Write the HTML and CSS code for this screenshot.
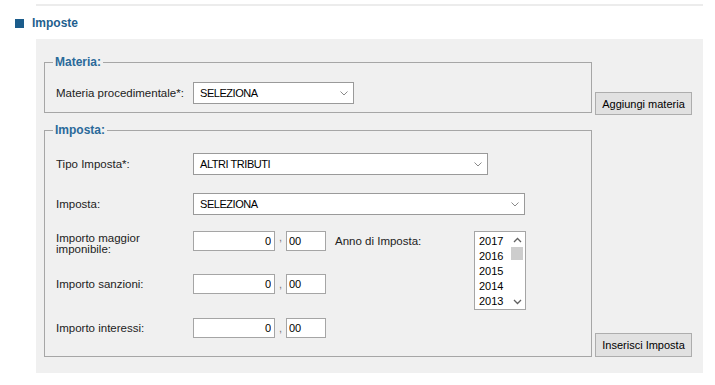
FILE: index.html
```html
<!DOCTYPE html>
<html lang="it">
<head>
    <meta charset="UTF-8">
    <meta name="viewport" content="width=device-width, initial-scale=1.0">
    <title>Imposte</title>
    <link rel="stylesheet" href="styles.css">
</head>
<body>
    <div class="top-line"></div>

    <h2 class="section-title"><span class="bullet"></span>Imposte</h2>

    <div class="panel">
        <!-- materia -->
        <div class="block-row">
            <fieldset class="box box-materia">
                <legend>Materia:</legend>
                <div class="form-row">
                    <label class="field-label">Materia procedimentale*:</label>
                    <div class="select select-materia">
                        <span class="select-text">SELEZIONA</span>
                        <svg class="chevron" width="8" height="5" viewBox="0 0 8 5"><path d="M0.5 0.5 L4 4 L7.5 0.5" fill="none" stroke="#8a8a8a" stroke-width="1"/></svg>
                    </div>
                </div>
            </fieldset>
            <button class="btn">Aggiungi materia</button>
        </div>

        <!-- imposta -->
        <div class="block-row">
            <fieldset class="box box-imposta">
                <legend>Imposta:</legend>
                <div class="form-row">
                    <label class="field-label">Tipo Imposta*:</label>
                    <div class="select select-tipo">
                        <span class="select-text">ALTRI TRIBUTI</span>
                        <svg class="chevron" width="8" height="5" viewBox="0 0 8 5"><path d="M0.5 0.5 L4 4 L7.5 0.5" fill="none" stroke="#8a8a8a" stroke-width="1"/></svg>
                    </div>
                </div>
                <div class="form-row row-imposta">
                    <label class="field-label">Imposta:</label>
                    <div class="select select-imposta">
                        <span class="select-text">SELEZIONA</span>
                        <svg class="chevron" width="8" height="5" viewBox="0 0 8 5"><path d="M0.5 0.5 L4 4 L7.5 0.5" fill="none" stroke="#8a8a8a" stroke-width="1"/></svg>
                    </div>
                </div>

                <div class="importi">
                    <div class="importi-col">
                        <div class="importo-row importo-top">
                            <label class="field-label two-lines">Importo maggior imponibile:</label>
                            <input class="num-int" type="text" value="0">
                            <span class="sep">,</span>
                            <input class="num-dec" type="text" value="00">
                        </div>
                        <div class="importo-row">
                            <label class="field-label">Importo sanzioni:</label>
                            <input class="num-int" type="text" value="0">
                            <span class="sep">,</span>
                            <input class="num-dec" type="text" value="00">
                        </div>
                        <div class="importo-row">
                            <label class="field-label">Importo interessi:</label>
                            <input class="num-int" type="text" value="0">
                            <span class="sep">,</span>
                            <input class="num-dec" type="text" value="00">
                        </div>
                    </div>

                    <label class="field-label anno-label">Anno di Imposta:</label>
                    <div class="listbox">
                        <ul class="year-list">
                            <li>2017</li>
                            <li>2016</li>
                            <li>2015</li>
                            <li>2014</li>
                            <li>2013</li>
                        </ul>
                        <div class="scrollbar">
                            <svg width="9" height="6" viewBox="0 0 9 6"><path d="M1 5 L4.5 1.5 L8 5" fill="none" stroke="#606060" stroke-width="1.3"/></svg>
                            <div class="thumb"></div>
                            <div class="track"></div>
                            <svg width="9" height="6" viewBox="0 0 9 6"><path d="M1 1 L4.5 4.5 L8 1" fill="none" stroke="#606060" stroke-width="1.3"/></svg>
                        </div>
                    </div>
                </div>
            </fieldset>
            <button class="btn btn-imposta">Inserisci Imposta</button>
        </div>
    </div>
</body>
</html>
```

FILE: styles.css
```css
body {
    margin: 0;
    font-family: "Liberation Sans", Arial, sans-serif;
    color: #222;
    background: #fff;
}
.top-line {
    height: 2px;
    margin: 4px 12px 0 36px;
    background: #ececec;
}
.section-title {
    display: flex;
    align-items: center;
    gap: 8px;
    height: 14px;
    margin: 10px 0 0 15px;
    font-size: 12px;
    font-weight: bold;
    color: #1f5f8e;
}
.bullet {
    width: 9px;
    height: 9px;
    background: #1b5c8b;
}
.panel {
    width: 667px;
    margin: 9px 0 0 36px;
    padding: 16px 8px;
    box-sizing: border-box;
    background: #f0f0f0;
}
.block-row {
    display: flex;
    align-items: flex-end;
    gap: 3px;
}
.block-row + .block-row {
    margin-top: 8px;
}
.box {
    width: 548px;
    box-sizing: border-box;
    margin: 0;
    border: 1px solid #a6a6a6;
    padding: 12px 10px 8px 11px;
}
.box-materia {
    margin-bottom: 2px;
}
.box-imposta {
    padding-top: 15px;
    padding-bottom: 18px;
}
.box legend {
    margin-left: -3px;
    padding: 0 2px;
    font-size: 12px;
    line-height: 15px;
    font-weight: bold;
    color: #2a6a9a;
}
.form-row {
    display: flex;
    align-items: center;
}
.row-imposta {
    margin-top: 18px;
}
.field-label {
    width: 137px;
    flex-shrink: 0;
    font-size: 11.5px;
    color: #222;
}
.select {
    display: flex;
    align-items: center;
    justify-content: space-between;
    height: 22px;
    box-sizing: border-box;
    padding: 0 5px 0 6px;
    background: #fff;
    border: 1px solid #9a9a9a;
}
.select-materia { width: 161px; }
.select-tipo { width: 295px; }
.select-imposta { width: 332px; }
.select-text {
    font-size: 11px;
    letter-spacing: -0.45px;
    color: #000;
}
.importi {
    display: flex;
    align-items: flex-start;
    margin-top: 16px;
}
.importi-col {
    display: flex;
    flex-direction: column;
    gap: 23px;
    width: 270px;
}
.importo-row {
    display: flex;
    align-items: center;
    height: 20px;
}
.importo-row:last-child {
    margin-top: 1px;
}
.importo-top {
    align-items: flex-start;
}
.two-lines {
    padding-top: 2px;
    line-height: 11px;
}
.importo-row input {
    height: 20px;
    box-sizing: border-box;
    margin: 0;
    border: 1px solid #a5a5a5;
    background: #fff;
    font-family: "Liberation Sans", Arial, sans-serif;
    font-size: 11px;
    color: #000;
    outline: none;
}
.num-int {
    width: 82px;
    padding: 0 3px;
    text-align: right;
}
.num-dec {
    width: 40px;
    padding: 0 2px;
}
.sep {
    width: 11px;
    text-align: center;
    font-size: 11px;
    color: #777;
}
.anno-label {
    margin: 4px 0 0 9px;
    width: 139px;
}
.listbox {
    display: flex;
    width: 52px;
    height: 79px;
    box-sizing: border-box;
    border: 1px solid #a5a5a5;
    background: #fff;
}
.year-list {
    flex: 1;
    margin: 0;
    padding: 2px 0 0 4px;
    list-style: none;
    font-size: 11px;
    line-height: 15px;
    color: #000;
}
.scrollbar {
    display: flex;
    flex-direction: column;
    align-items: center;
    width: 16px;
    padding: 5px 0 4px;
    box-sizing: border-box;
}
.thumb {
    width: 12px;
    height: 13px;
    margin-top: 4px;
    background: #cdcdcd;
}
.track {
    flex: 1;
}
.btn {
    width: 97px;
    height: 23px;
    padding: 0;
    background: #e1e1e1;
    border: 1px solid #adadad;
    font-family: "Liberation Sans", Arial, sans-serif;
    font-size: 11px;
    color: #000;
}
.btn-imposta {
    height: 24px;
}
```
